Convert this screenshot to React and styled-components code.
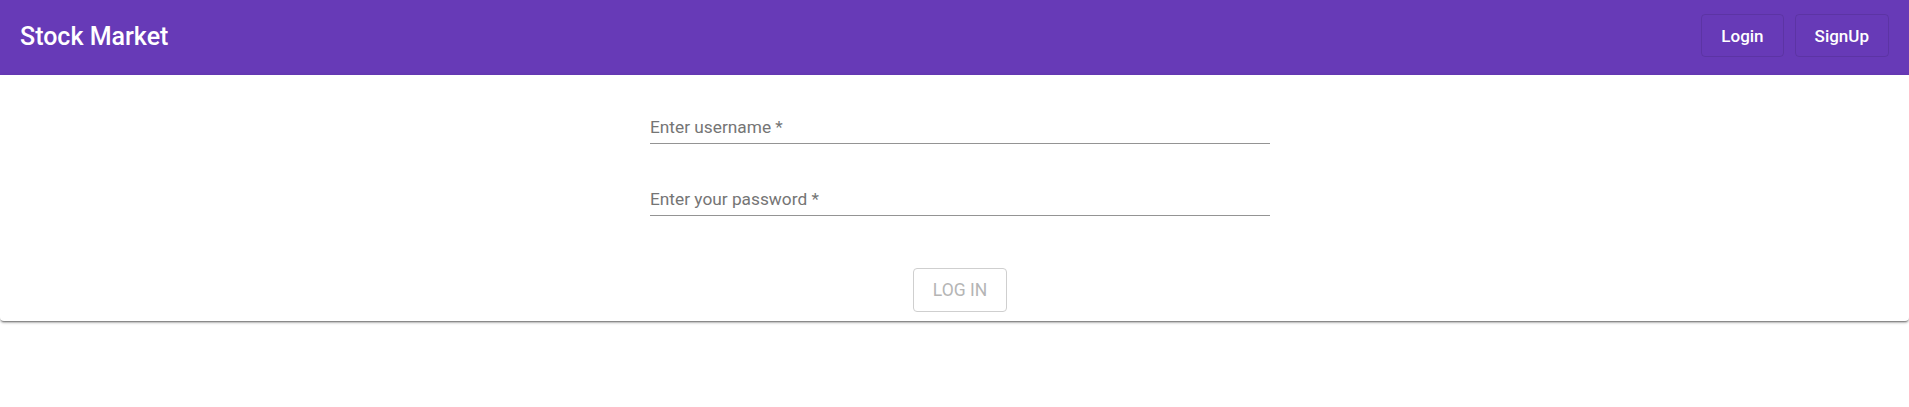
import React from "react";
import styled, { createGlobalStyle } from "styled-components";

const GlobalStyle = createGlobalStyle`
  html, body {
    margin: 0;
    padding: 0;
    background: #ffffff;
    font-family: Roboto, "Liberation Sans", Arial, sans-serif;
  }
  * { box-sizing: border-box; }
`;

const Page = styled.div`
  width: 100%;
  min-height: 407px;
  background: #ffffff;
`;

const AppBar = styled.header`
  height: 75px;
  background: #673ab7;
  color: #ffffff;
  display: flex;
  align-items: center;
  justify-content: space-between;
  padding: 0 20px;
`;

const Title = styled.h1`
  margin: 0 0 3px 0;
  font-size: 25px;
  line-height: 1;
  font-weight: 500;
  letter-spacing: 0;
`;

const Nav = styled.nav`
  display: flex;
  gap: 11px;
  align-items: center;
  margin-bottom: 4px;
`;

const NavButton = styled.button`
  height: 43px;
  padding: 0 19px;
  background: transparent;
  color: #ffffff;
  border: 1px solid rgba(0, 0, 0, 0.1);
  border-radius: 4px;
  font-family: Roboto, "Liberation Sans", Arial, sans-serif;
  font-size: 17px;
  font-weight: 500;
  cursor: pointer;
`;

const Card = styled.main`
  background: #ffffff;
  border-radius: 0 0 4px 4px;
  box-shadow: 0 2px 1px -1px rgba(0, 0, 0, 0.3), 0 2px 2px 0 rgba(0, 0, 0, 0.22),
    0 1px 4px 0 rgba(0, 0, 0, 0.1);
  display: flex;
  justify-content: center;
  padding: 42px 0 9px 11px;
`;

const Form = styled.form`
  width: 620px;
  display: flex;
  flex-direction: column;
  align-items: center;
`;

const Field = styled.div`
  width: 100%;
  border-bottom: 1px solid #949494;
  padding-bottom: 5px;
  margin-top: ${(p) => p.$top || 0}px;
`;

const Input = styled.input`
  display: block;
  width: 100%;
  border: none;
  outline: none;
  padding: 0;
  height: 21px;
  line-height: 21px;
  font-family: Roboto, "Liberation Sans", Arial, sans-serif;
  font-size: 17.3px;
  color: #222;
  background: transparent;

  &::placeholder {
    color: #757575;
    opacity: 1;
  }
`;

const SubmitButton = styled.button`
  margin-top: 52px;
  width: 94px;
  height: 44px;
  background: #ffffff;
  border: 1px solid #cfcfcf;
  border-radius: 4px;
  color: #b5b5b5;
  font-family: Roboto, "Liberation Sans", Arial, sans-serif;
  font-size: 17.5px;
  font-weight: 400;
  text-transform: uppercase;
`;

export default function App() {
  return (
    <Page>
      <GlobalStyle />
      <AppBar>
        <Title>Stock Market</Title>
        <Nav>
          <NavButton type="button">Login</NavButton>
          <NavButton type="button">SignUp</NavButton>
        </Nav>
      </AppBar>
      <Card>
        <Form onSubmit={(e) => e.preventDefault()}>
          <Field>
            <Input type="text" placeholder="Enter username *" />
          </Field>
          <Field $top={45}>
            <Input type="password" placeholder="Enter your password *" />
          </Field>
          <SubmitButton type="submit" disabled>
            Log In
          </SubmitButton>
        </Form>
      </Card>
    </Page>
  );
}
